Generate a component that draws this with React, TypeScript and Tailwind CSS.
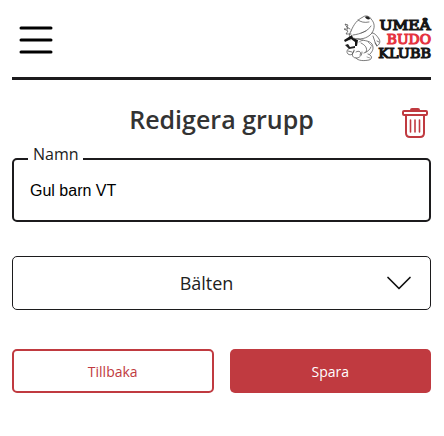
import React from "react";

function Logo() {
  return (
    <svg className="overflow-visible" width="90" height="50" viewBox="0 0 90 50" role="img" aria-label="Umeå Budo Klubb">
      <g fill="none" stroke="#444" strokeWidth="0.7" strokeLinecap="round" strokeLinejoin="round">
        <path d="M7 16 C10 9 13 5 19 2 C21 0 26 1 27 4 C31 8 31 13 28 18 C23 24 16 25 9 23" />
        <path d="M7 16 C5 19 5 22 6 25 M27 11 C24 16 17 19 9 20 M14 5 C17 7 20 8 25 7" />
        <path d="M6 14 L3 12 L4 10 L1 9 L4 14 L0 14 L4 16 L2 19 L7 19" />
        <path d="M28 18 C31 18 33 21 35 24 C37 27 35 30 33 31 M29 21 L31 27 L33 31 L31 28 M33 26 L35 27" />
        <path d="M14 24 C19 26 25 25 28 29 C30 33 29 36 26 39 M17 28 C21 30 24 33 22 37 M27 32 C26 35 23 37 20 38" />
        <path d="M6 33 C3 34 2 37 4 39 C7 41 10 39 10 35 M10 36 C7 38 8 43 12 43 C16 43 18 40 18 37" />
        <path d="M12 43 C14 46 20 46 25 45 C29 44 28 40 24 39 M12 37 C15 35 18 37 16 40 M4 36 L8 37" />
        <path d="M15 27 L19 25 M24 27 L28 31 M17 18 L22 16 M23 42 L26 43" strokeWidth="0.5" />
      </g>
      <path d="M0 25 L8 20 L9 23 L14 25 L13 31 L11 31 L11 27 L7 24 L1 27 Z" fill="#161616" />
      <path d="M1 30 L4 29 L6 32 L11 31 L11 33 L5 34 Z" fill="#222" />
      <path d="M21 2 C23 0 26 2 26 4 C24 5 22 4 21 2Z" fill="#222" />
      <g fontFamily="'DejaVu Serif', serif" fontWeight="normal" fontSize="13.6" strokeWidth="1.2" strokeLinejoin="miter">
        <text x="35.5" y="15" fill="#171717" stroke="#171717" textLength="51.2" lengthAdjust="spacingAndGlyphs">UMEÅ</text>
        <text x="42.8" y="29.2" fill="#e5343f" stroke="#e5343f" textLength="44.2" lengthAdjust="spacingAndGlyphs">BUDO</text>
        <text x="34.3" y="43.2" fill="#171717" stroke="#171717" textLength="52.7" lengthAdjust="spacingAndGlyphs">KLUBB</text>
      </g>
    </svg>
  );
}

export default function App() {
  return (
    <main className="h-[436px] w-full overflow-hidden bg-white pl-3 pr-[13px] font-['Open_Sans',sans-serif] text-[#212121]">
      <header className="flex h-20 items-start justify-between border-b-[3px] border-[#1c1b1d]">
        <button aria-label="Meny" className="ml-[7px] mt-6">
          <svg width="34" height="32" viewBox="0 0 34 32" stroke="#000" strokeWidth="3" strokeLinecap="round">
            <path d="M2 4H32M2 16H32M2 28H32" />
          </svg>
        </button>
        <div className="-mr-[3px] mt-[15px]"><Logo /></div>
      </header>

      <div className="flex h-[78px] items-start">
        <div className="w-[30px]" />
        <h1 className="mt-[21px] flex-1 text-center text-[25px] font-semibold leading-9 text-[#333]">Redigera grupp</h1>
        <button aria-label="Ta bort" className="mr-[2px] mt-[27px]">
          <svg width="28" height="32" viewBox="0 0 28 32" fill="none" stroke="#c03a40" strokeWidth="2" strokeLinejoin="round" strokeLinecap="round">
            <path d="M10 3Q10 2 11 2H17Q18 2 18 3Z" />
            <rect x="2" y="4" width="24" height="4" rx="1" />
            <path d="M5 8V26Q5 30 9 30H19Q23 30 23 26V8" />
            <path d="M9.5 13V25M14 13V25M18.5 13V25" strokeWidth="1.6" />
          </svg>
        </button>
      </div>

      <div className="flex h-16 flex-col rounded-[5px] border-2 border-[#1c1b1d]">
        <label htmlFor="namn" className="-mt-[18px] ml-[14px] h-6 self-start bg-white pl-[5px] pr-1 text-base leading-6">Namn</label>
        <input id="namn" defaultValue="Gul barn VT" className="mt-[13px] h-6 w-full bg-transparent px-4 font-['Liberation_Sans',sans-serif] text-base text-black outline-none" />
      </div>

      <button className="mt-[34px] flex h-[54px] w-full items-center rounded-[5px] border border-[#1c1b1d]">
        <span className="ml-[14px] flex-1 text-center text-lg">Bälten</span>
        <svg className="mr-[18px]" width="26" height="16" viewBox="0 0 26 16" fill="none" stroke="#111" strokeWidth="1.7" strokeLinecap="round" strokeLinejoin="round">
          <path d="M2 2.5L13 13.5L24 2.5" />
        </svg>
      </button>

      <div className="mt-[39px] grid h-11 grid-cols-2 gap-4 text-sm">
        <button className="rounded-[5px] border-2 border-[#c03a40] pt-px text-[#c03a40]">Tillbaka</button>
        <button className="rounded-[5px] bg-[#c03a40] pt-px text-white">Spara</button>
      </div>
    </main>
  );
}
